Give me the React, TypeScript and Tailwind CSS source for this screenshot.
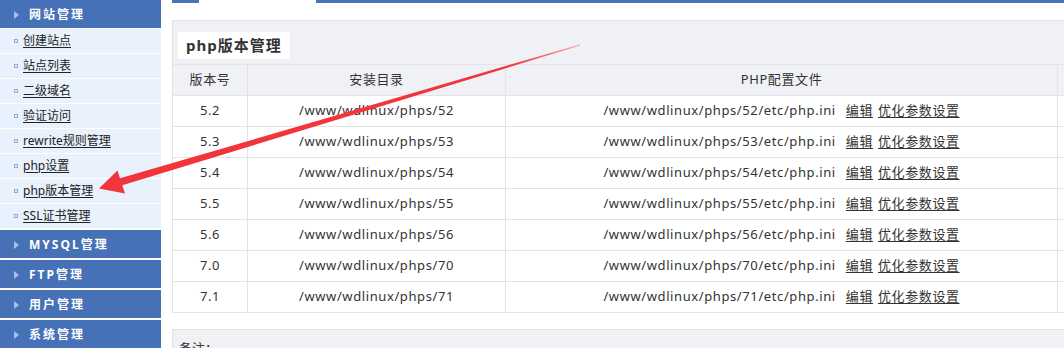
const font = { fontFamily: '"Noto Sans", "Noto Sans CJK SC", sans-serif' };

const siteLinks = [
  "创建站点",
  "站点列表",
  "二级域名",
  "验证访问",
  "rewrite规则管理",
  "php设置",
  "php版本管理",
  "SSL证书管理",
];

const otherMenus = ["MYSQL管理", "FTP管理", "用户管理", "系统管理"];

const versions = [
  ["5.2", "52"],
  ["5.3", "53"],
  ["5.4", "54"],
  ["5.5", "55"],
  ["5.6", "56"],
  ["7.0", "70"],
  ["7.1", "71"],
];

const MenuHead = ({ label }: { label: string }) => (
  <div className="flex h-[28px] items-center bg-[#4671b6] pl-[14px] pt-[2px]">
    <span className="h-0 w-0 border-y-[4px] border-l-[5px] border-y-transparent border-l-[#a3bfe8]" />
    <span className="ml-[10px] text-[12px] font-bold tracking-[2px] text-white">{label}</span>
  </div>
);

const App = () => {
  return (
    <div className="relative flex h-[348px] w-[1064px] overflow-hidden bg-white text-[#333]" style={font}>
      {/* sidebar */}
      <div className="w-[161px] shrink-0 bg-white">
        <MenuHead label="网站管理" />
        {siteLinks.map((item) => (
          <div key={item} className="flex h-[25px] items-center border-t border-white bg-[#e9f1fc] pl-[14px]">
            <span className="h-[4px] w-[4px] border border-[#8eaad8]" />
            <a className="ml-[5px] text-[12px] text-[#222] underline underline-offset-2">{item}</a>
          </div>
        ))}
        {otherMenus.map((m) => (
          <div key={m} className="mt-[2px]">
            <MenuHead label={m} />
          </div>
        ))}
      </div>

      {/* main */}
      <div className="w-[1000px] shrink-0 pl-[11px]">
        <div className="flex h-[3px]">
          <div className="w-[27px] bg-[#4a73b5]" />
          <div className="w-[117px] bg-white" />
          <div className="flex-1 bg-[#4a73b5]" />
        </div>

        <div className="mt-[17px] bg-[#f0f1f5]">
          <div className="border-x border-t border-[#e1e3e9] pb-[5px] pl-[5px] pt-[11px]">
            <div className="inline-flex h-[27px] items-center bg-white px-[8px] text-[15px] font-bold tracking-[1px] text-[#333]">
              php版本管理
            </div>
          </div>
          <table className="table-fixed border-collapse text-[13px] tracking-[0.6px]">
            <colgroup>
              <col className="w-[75px]" />
              <col className="w-[258px]" />
              <col className="w-[552px]" />
              <col className="w-[80px]" />
            </colgroup>
            <thead>
              <tr className="h-[31px] bg-[#f0f1f5]">
                <th className="border border-[#e1e3e9] font-normal">版本号</th>
                <th className="border border-[#e1e3e9] font-normal">安装目录</th>
                <th className="border border-[#e1e3e9] font-normal">PHP配置文件</th>
                <th className="border border-[#e1e3e9] font-normal"></th>
              </tr>
            </thead>
            <tbody>
              {versions.map(([v, d]) => (
                <tr key={v} className="h-[31px] bg-white">
                  <td className="border border-[#e1e3e9] text-center">{v}</td>
                  <td className="border border-[#e1e3e9] text-center">/www/wdlinux/phps/{d}</td>
                  <td className="border border-[#e1e3e9] text-center">
                    /www/wdlinux/phps/{d}/etc/php.ini
                    <a className="ml-[10px] underline underline-offset-2">编辑</a>
                    <a className="ml-[5px] underline underline-offset-2">优化参数设置</a>
                  </td>
                  <td className="border border-[#e1e3e9]"></td>
                </tr>
              ))}
            </tbody>
          </table>
        </div>

        <div className="mt-[16px] border border-[#e1e3e9] bg-[#f0f1f5] pl-[6px] pt-[9px] text-[13px]">
          备注：
          <div className="h-[40px]" />
        </div>
      </div>

      {/* red arrow pointing at the menu item */}
      <svg className="pointer-events-none absolute left-0 top-0" width="1064" height="348" viewBox="0 0 1064 348">
        <defs>
          <linearGradient id="shaft" x1="100" y1="188" x2="580" y2="45" gradientUnits="userSpaceOnUse">
            <stop offset="0" stopColor="#f2353a" />
            <stop offset="0.85" stopColor="#f2353a" />
            <stop offset="1" stopColor="#f6a0a3" />
          </linearGradient>
        </defs>
        <polygon
          points="99,188.5 117.5,170.5 120,178.3 579.9,44.4 580.1,45.6 122.3,185.2 125,193.5"
          fill="url(#shaft)"
        />
      </svg>
    </div>
  );
};

export default App;
